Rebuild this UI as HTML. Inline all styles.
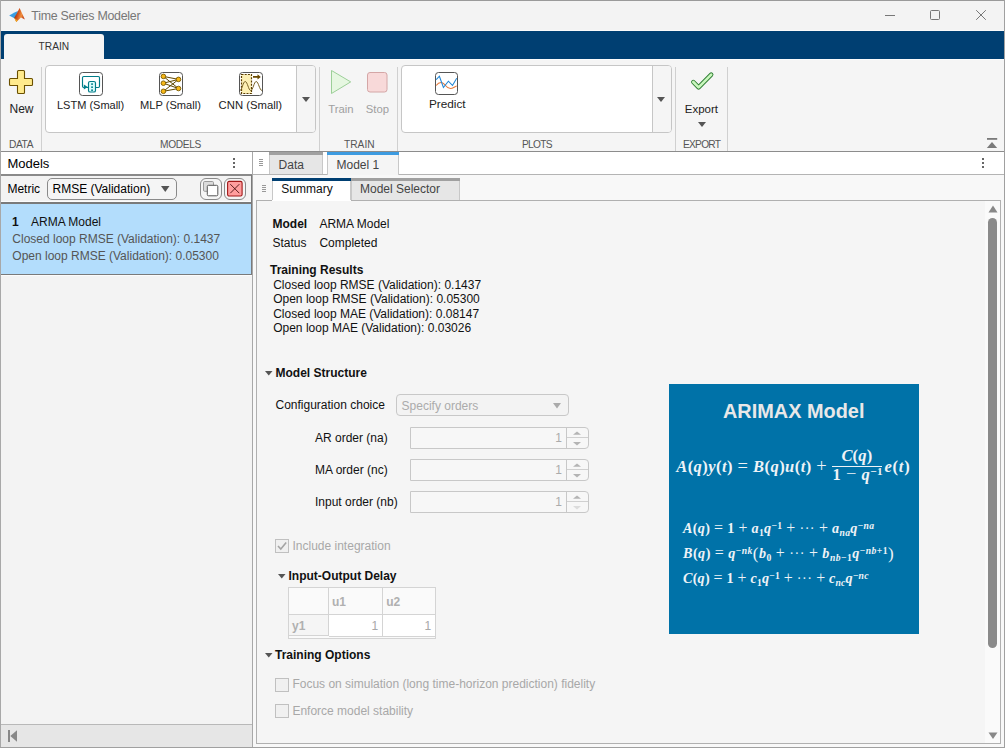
<!DOCTYPE html>
<html><head><meta charset="utf-8">
<style>
*{box-sizing:border-box;margin:0;padding:0}
html,body{width:1005px;height:748px;overflow:hidden;background:#f5f5f5;font-family:"Liberation Sans",sans-serif;font-size:12px;color:#000}
.a{position:absolute;overflow:visible}
.t{position:absolute;white-space:nowrap;line-height:1}
.eq{font-family:"Liberation Serif",serif;font-weight:700}
</style></head>
<body>
<div class="a" style="left:0px;top:0px;width:1005px;height:31px;background:#f3f3f3;"></div>
<div class="t" style="left:31.3px;top:9.50px;font-size:12.4px;color:#777;font-weight:400;letter-spacing:-0.25px">Time Series Modeler</div>
<svg class="a" style="left:8px;top:7px;" width="19" height="17" viewBox="0 0 19 17"><defs><linearGradient id="mg" x1="0" y1="0" x2="1" y2="0.4"><stop offset="0" stop-color="#6a1010"/><stop offset="0.45" stop-color="#d05018"/><stop offset="0.75" stop-color="#f09040"/><stop offset="1" stop-color="#c84818"/></linearGradient></defs><path d="M1.2 8.6 L6.5 5.6 L10 4 L8.5 9 L6.8 11.5 Z" fill="#3a9ee2"/><path d="M11.6 0.9 L16.9 12.4 L13 10.5 L8.3 15 L6.2 10.8 L8.5 7 Z" fill="url(#mg)"/><path d="M6.2 10.8 L8.3 15 L9.5 13.5 Z" fill="#f0b020"/></svg>
<div class="a" style="left:885px;top:15px;width:10px;height:1px;background:#777;"></div>
<div class="a" style="left:930px;top:10px;width:10px;height:10px;background:none;border:1px solid #777;border-radius:1.5px"></div>
<svg class="a" style="left:976px;top:10px;" width="10" height="10" viewBox="0 0 10 10"><path d="M0.2 0.2 L9.8 9.8 M9.8 0.2 L0.2 9.8" stroke="#777" stroke-width="1"/></svg>
<div class="a" style="left:0px;top:31px;width:1005px;height:28px;background:#003f72;"></div>
<div class="a" style="left:4px;top:34px;width:100px;height:25px;background:#f5f5f5;border-radius:3px 3px 0 0"></div>
<div class="a" style="left:104px;top:59px;width:900px;height:1px;background:#fcfcfc;"></div>
<div class="a" style="left:0px;top:30px;width:1005px;height:1px;background:#fafafa;"></div>
<div class="t" style="left:38.6px;top:41.97px;font-size:10.2px;color:#333;font-weight:400;">TRAIN</div>
<div class="a" style="left:0px;top:60px;width:1005px;height:91px;background:#f5f5f5;"></div>
<div class="a" style="left:0px;top:151px;width:1005px;height:1px;background:#8c8c8c;"></div>
<div class="a" style="left:41px;top:67px;width:1px;height:84px;background:#d0d0d0;"></div>
<div class="a" style="left:319px;top:67px;width:1px;height:84px;background:#d0d0d0;"></div>
<div class="a" style="left:397px;top:67px;width:1px;height:84px;background:#d0d0d0;"></div>
<div class="a" style="left:675px;top:67px;width:1px;height:84px;background:#d0d0d0;"></div>
<div class="a" style="left:727px;top:67px;width:1px;height:84px;background:#d0d0d0;"></div>
<div class="t" style="left:9px;top:139.97px;font-size:10.2px;color:#555;font-weight:400;letter-spacing:-0.4px">DATA</div>
<div class="t" style="left:160px;top:139.97px;font-size:10.2px;color:#555;font-weight:400;letter-spacing:-0.35px">MODELS</div>
<div class="t" style="left:344px;top:139.97px;font-size:10.2px;color:#555;font-weight:400;">TRAIN</div>
<div class="t" style="left:522px;top:139.97px;font-size:10.2px;color:#555;font-weight:400;letter-spacing:-0.7px">PLOTS</div>
<div class="t" style="left:683px;top:139.97px;font-size:10.2px;color:#555;font-weight:400;letter-spacing:-0.75px">EXPORT</div>
<svg class="a" style="left:9px;top:70px;" width="24" height="24" viewBox="0 0 24 24"><path d="M8.5 1.5 Q8.5 0.5 9.5 0.5 H14.5 Q15.5 0.5 15.5 1.5 V8.5 H22.5 Q23.5 8.5 23.5 9.5 V14.5 Q23.5 15.5 22.5 15.5 H15.5 V22.5 Q15.5 23.5 14.5 23.5 H9.5 Q8.5 23.5 8.5 22.5 V15.5 H1.5 Q0.5 15.5 0.5 14.5 V9.5 Q0.5 8.5 1.5 8.5 H8.5 Z" fill="#ffea8c" stroke="#6b5000" stroke-width="1.1"/></svg>
<div class="t" style="left:9.5px;top:103.04px;font-size:12px;color:#222;font-weight:400;">New</div>
<div class="a" style="left:45px;top:65px;width:271px;height:68px;background:#fff;border:1px solid #c6c6c6;border-radius:4px"></div>
<div class="a" style="left:296px;top:66px;width:19px;height:66px;background:#f5f5f5;border-left:1px solid #c6c6c6;border-radius:0 3px 3px 0"></div>
<svg class="a" style="left:302px;top:97px;" width="9" height="5" viewBox="0 0 9 5"><path d="M0 0 H8 L4 5 Z" fill="#555"/></svg>
<svg class="a" style="left:79px;top:72px;" width="24" height="24" viewBox="0 0 24 24"><rect x="0.5" y="0.5" width="23" height="23" rx="3" fill="#fff" stroke="#555" stroke-width="1"/><path d="M9 15.5 H4.7 Q3.5 15.5 3.5 14.3 V5.7 Q3.5 4.5 4.7 4.5 H19.3 Q20.5 4.5 20.5 5.7 V14.3 Q20.5 15.5 19.3 15.5 H17" fill="none" stroke="#007c88" stroke-width="1.15"/><rect x="9.5" y="9.5" width="7" height="10.5" rx="1.6" fill="#dafcfc" stroke="#007c88" stroke-width="1.15"/><rect x="12.2" y="11.3" width="1.7" height="1.6" fill="#00808c"/><rect x="12.2" y="14.4" width="1.7" height="1.6" fill="#00808c"/><rect x="12.2" y="17.4" width="1.7" height="1.6" fill="#00808c"/><path d="M4.8 12.5 L8.8 15 L4.8 17.5 Z" fill="#00808c"/></svg>
<div class="t" style="left:57px;top:99.89px;font-size:11px;color:#222;font-weight:400;">LSTM (Small)</div>
<svg class="a" style="left:159px;top:72px;" width="24" height="24" viewBox="0 0 24 24"><rect x="0.5" y="0.5" width="23" height="23" rx="3" fill="#fff" stroke="#555" stroke-width="1"/><line x1="4.4" y1="4.4" x2="19.5" y2="7.4" stroke="#5e4600" stroke-width="1"/><line x1="4.4" y1="4.4" x2="19.5" y2="16.5" stroke="#5e4600" stroke-width="1"/><line x1="4.4" y1="11.2" x2="19.5" y2="7.4" stroke="#5e4600" stroke-width="1"/><line x1="4.4" y1="11.2" x2="19.5" y2="16.5" stroke="#5e4600" stroke-width="1"/><line x1="4.4" y1="19.3" x2="19.5" y2="7.4" stroke="#5e4600" stroke-width="1"/><line x1="4.4" y1="19.3" x2="19.5" y2="16.5" stroke="#5e4600" stroke-width="1"/><circle cx="4.4" cy="4.4" r="2.3" fill="#f7b817" stroke="#7a5a00" stroke-width="0.9"/><circle cx="4.4" cy="11.2" r="2.3" fill="#f7b817" stroke="#7a5a00" stroke-width="0.9"/><circle cx="4.4" cy="19.3" r="2.3" fill="#f7b817" stroke="#7a5a00" stroke-width="0.9"/><circle cx="19.5" cy="7.4" r="2.3" fill="#f7b817" stroke="#7a5a00" stroke-width="0.9"/><circle cx="19.5" cy="16.5" r="2.3" fill="#f7b817" stroke="#7a5a00" stroke-width="0.9"/></svg>
<div class="t" style="left:140px;top:99.80px;font-size:11.1px;color:#222;font-weight:400;">MLP (Small)</div>
<svg class="a" style="left:239px;top:72px;" width="24" height="24" viewBox="0 0 24 24"><rect x="0.5" y="0.5" width="23" height="23" rx="3" fill="#fff" stroke="#555" stroke-width="1"/><rect x="2.5" y="2.5" width="10" height="19" fill="#fdf0b4" stroke="#5a3c00" stroke-width="1.2" stroke-dasharray="2 1.2"/><path d="M1 18.5 C3 18.5 4 9.5 6.2 9.5 C8.5 9.5 9.5 18.5 11.7 18.5 C14 18.5 15 9.5 17.2 9.5 C19.5 9.5 20.5 18.5 23 18.5" fill="none" stroke="#7a6428" stroke-width="1"/><path d="M14 4 H18.5 V2.3 L21.8 4.9 L18.5 7.5 V5.8 H14 Z" fill="#6b4a00"/></svg>
<div class="t" style="left:218.6px;top:99.63px;font-size:11.3px;color:#222;font-weight:400;">CNN (Small)</div>
<svg class="a" style="left:331px;top:70px;" width="21" height="25" viewBox="0 0 21 25"><path d="M0.5 0.5 L19.7 11.9 L0.5 23.5 Z" fill="#e6f7e1" stroke="#9ccf98" stroke-width="1"/></svg>
<svg class="a" style="left:367px;top:72px;" width="21" height="21" viewBox="0 0 21 21"><rect x="0.5" y="0.5" width="19.5" height="19.5" rx="2.5" fill="#f8d9d9" stroke="#d4a6a6" stroke-width="1"/></svg>
<div class="t" style="left:328.3px;top:103.83px;font-size:11.3px;color:#a0a0a0;font-weight:400;">Train</div>
<div class="t" style="left:365.8px;top:103.83px;font-size:11.3px;color:#a0a0a0;font-weight:400;">Stop</div>
<div class="a" style="left:401px;top:65px;width:271px;height:68px;background:#fff;border:1px solid #c6c6c6;border-radius:4px"></div>
<div class="a" style="left:652px;top:66px;width:19px;height:66px;background:#f5f5f5;border-left:1px solid #c6c6c6;border-radius:0 3px 3px 0"></div>
<svg class="a" style="left:657px;top:97px;" width="9" height="5" viewBox="0 0 9 5"><path d="M0 0 H8 L4 5 Z" fill="#555"/></svg>
<svg class="a" style="left:435px;top:72px;" width="23" height="23" viewBox="0 0 23 23"><rect x="0.5" y="0.5" width="22" height="22" rx="3" fill="#fff" stroke="#555" stroke-width="1"/><path d="M1.2 13.5 C3 11 4.5 10.5 6 10.5 C8 10.5 9 12 10.5 13.5 C12 15.5 13.5 16.5 15.5 16.5 C18 16.5 19.5 14.5 21.7 14" fill="none" stroke="#e87a3a" stroke-width="1.1"/><path d="M1.2 7.6 L4.4 4.2 L8.4 15.5 L13.4 9.2 L17.5 13.4 L21.7 6.2" fill="none" stroke="#1f86d6" stroke-width="1.05"/></svg>
<div class="t" style="left:428.9px;top:99.21px;font-size:11.8px;color:#222;font-weight:400;">Predict</div>
<svg class="a" style="left:688px;top:70px;" width="28" height="22" viewBox="0 0 28 22"><path d="M5.3 12 L10.6 17.4 L23.2 4.6" fill="none" stroke="#2e7d32" stroke-width="4.4" stroke-linecap="round" stroke-linejoin="round"/><path d="M5.3 12 L10.6 17.4 L23.2 4.6" fill="none" stroke="#c9f7bd" stroke-width="2.6" stroke-linecap="round" stroke-linejoin="round"/></svg>
<div class="t" style="left:684.8px;top:103.67px;font-size:11.5px;color:#222;font-weight:400;">Export</div>
<svg class="a" style="left:698px;top:122px;" width="9" height="5" viewBox="0 0 9 5"><path d="M0 0 H8 L4 5 Z" fill="#555"/></svg>
<svg class="a" style="left:986px;top:138px;" width="13" height="11" viewBox="0 0 13 11"><rect x="1" y="0" width="10.2" height="1.8" fill="#7a7a7a"/><path d="M0.8 10 H11.2 L6 4 Z" fill="#7a7a7a"/></svg>
<div class="a" style="left:0px;top:152px;width:252px;height:23px;background:#fff;"></div>
<div class="t" style="left:7.4px;top:157.00px;font-size:13px;color:#000;font-weight:400;">Models</div>
<div class="a" style="left:233px;top:158px;width:2px;height:2px;background:#666;"></div>
<div class="a" style="left:233px;top:162px;width:2px;height:2px;background:#666;"></div>
<div class="a" style="left:233px;top:166px;width:2px;height:2px;background:#666;"></div>
<div class="a" style="left:0px;top:174px;width:252px;height:2px;background:#8a8a8a;"></div>
<div class="a" style="left:0px;top:176px;width:252px;height:26px;background:#f3f3f3;"></div>
<div class="t" style="left:7.4px;top:182.84px;font-size:12px;color:#000;font-weight:400;">Metric</div>
<div class="a" style="left:47px;top:178px;width:130px;height:22px;background:#f5f5f5;border:1px solid #8a8a8a;border-radius:5px"></div>
<div class="t" style="left:52.5px;top:182.84px;font-size:12px;color:#000;font-weight:400;">RMSE (Validation)</div>
<svg class="a" style="left:161px;top:186px;" width="9" height="6" viewBox="0 0 9 6"><path d="M0 0 H8.5 L4.25 6 Z" fill="#555"/></svg>
<div class="a" style="left:200px;top:178px;width:22px;height:22px;background:#f5f5f5;border:1px solid #8a8a8a;border-radius:6px"></div>
<svg class="a" style="left:203px;top:181px;" width="16" height="16" viewBox="0 0 16 16"><rect x="0.5" y="0.5" width="10" height="9.8" rx="1.2" fill="#dcdcdc" stroke="#9a9a9a"/><rect x="4.3" y="4.3" width="10.5" height="10.5" rx="1.2" fill="#fff" stroke="#555"/></svg>
<div class="a" style="left:224px;top:178px;width:22px;height:22px;background:#f5f5f5;border:1px solid #8a8a8a;border-radius:6px"></div>
<svg class="a" style="left:227px;top:181px;" width="16" height="16" viewBox="0 0 16 16"><rect x="0.6" y="0.4" width="14.5" height="14.6" rx="1.5" fill="#ff9e9e" stroke="#a01818" stroke-width="1.1"/><path d="M3.3 3.2 L12.3 12.2 M12.3 3.2 L3.3 12.2" stroke="#4a1010" stroke-width="0.9"/></svg>
<div class="a" style="left:0px;top:202px;width:252px;height:2px;background:#7a7a7a;"></div>
<div class="a" style="left:0px;top:201px;width:252px;height:1px;background:#fcfcfc;"></div>
<div class="a" style="left:1px;top:204px;width:250px;height:70px;background:#b3ddfc;"></div>
<div class="a" style="left:1px;top:274px;width:251px;height:1px;background:#7a7a7a;"></div>
<div class="t" style="left:12px;top:216.04px;font-size:12px;color:#111;font-weight:700;">1</div>
<div class="t" style="left:31px;top:216.04px;font-size:12px;color:#111;font-weight:400;">ARMA Model</div>
<div class="t" style="left:12.3px;top:232.84px;font-size:12px;color:#555;font-weight:400;">Closed loop RMSE (Validation): 0.1437</div>
<div class="t" style="left:12.3px;top:249.84px;font-size:12px;color:#555;font-weight:400;">Open loop RMSE (Validation): 0.05300</div>
<div class="a" style="left:0px;top:275px;width:252px;height:449px;background:#f3f3f3;"></div>
<div class="a" style="left:0px;top:275px;width:252px;height:1px;background:#fcfcfc;"></div>
<div class="a" style="left:0px;top:724px;width:252px;height:1px;background:#b8b8b8;"></div>
<div class="a" style="left:0px;top:725px;width:252px;height:23px;background:#e6e6e6;"></div>
<svg class="a" style="left:8px;top:730px;" width="10" height="12" viewBox="0 0 10 12"><rect x="0" y="0" width="2" height="12" fill="#888"/><path d="M2.3 6 L9 0.2 V11.8 Z" fill="#888"/></svg>
<div class="a" style="left:252px;top:152px;width:1px;height:596px;background:#a8a8a8;"></div>
<div class="a" style="left:251px;top:175px;width:1px;height:100px;background:#7a7a7a;"></div>
<div class="a" style="left:253px;top:152px;width:752px;height:22px;background:#fff;"></div>
<div class="a" style="left:253px;top:174px;width:752px;height:1px;background:#b4b4b4;"></div>
<div class="a" style="left:253px;top:175px;width:752px;height:573px;background:#f8f8f8;"></div>
<div class="a" style="left:259px;top:159px;width:4px;height:1px;background:#999;"></div>
<div class="a" style="left:259px;top:161px;width:4px;height:1px;background:#999;"></div>
<div class="a" style="left:259px;top:163px;width:4px;height:1px;background:#999;"></div>
<div class="a" style="left:259px;top:165px;width:4px;height:1px;background:#999;"></div>
<div class="a" style="left:269px;top:152px;width:54px;height:22px;background:#e6e6e6;border-left:1px solid #c8c8c8;border-right:1px solid #c8c8c8"></div>
<div class="a" style="left:269px;top:152px;width:54px;height:3px;background:#a0a0a0;"></div>
<div class="t" style="left:278.6px;top:158.84px;font-size:12px;color:#444;font-weight:400;">Data</div>
<div class="a" style="left:327px;top:152px;width:72px;height:23px;background:#f5f5f5;border-left:1px solid #c8c8c8;border-right:1px solid #c8c8c8"></div>
<div class="a" style="left:327px;top:152px;width:72px;height:3px;background:#3d9be0;"></div>
<div class="t" style="left:336.5px;top:158.84px;font-size:12px;color:#444;font-weight:400;">Model 1</div>
<div class="a" style="left:982px;top:158px;width:2px;height:2px;background:#666;"></div>
<div class="a" style="left:982px;top:162px;width:2px;height:2px;background:#666;"></div>
<div class="a" style="left:982px;top:166px;width:2px;height:2px;background:#666;"></div>
<div class="a" style="left:262px;top:185px;width:4px;height:1px;background:#999;"></div>
<div class="a" style="left:262px;top:187px;width:4px;height:1px;background:#999;"></div>
<div class="a" style="left:262px;top:189px;width:4px;height:1px;background:#999;"></div>
<div class="a" style="left:262px;top:191px;width:4px;height:1px;background:#999;"></div>
<div class="a" style="left:272px;top:178px;width:79px;height:23px;background:#fff;border-left:1px solid #c8c8c8;border-right:1px solid #c8c8c8"></div>
<div class="a" style="left:272px;top:178px;width:79px;height:3px;background:#003f72;"></div>
<div class="t" style="left:281.3px;top:182.84px;font-size:12px;color:#111;font-weight:400;">Summary</div>
<div class="a" style="left:351px;top:178px;width:109px;height:22px;background:#e6e6e6;border-left:1px solid #c8c8c8;border-right:1px solid #c8c8c8"></div>
<div class="a" style="left:351px;top:178px;width:109px;height:3px;background:#a0a0a0;"></div>
<div class="t" style="left:360px;top:182.84px;font-size:12px;color:#444;font-weight:400;">Model Selector</div>
<div class="a" style="left:256px;top:200px;width:745px;height:544px;background:#f5f5f5;border:1px solid #b0b0b0"></div>
<div class="a" style="left:272px;top:200px;width:79px;height:1px;background:#fff;"></div>
<div class="a" style="left:985px;top:201px;width:15px;height:542px;background:#fafafa;"></div>
<svg class="a" style="left:988px;top:205px;" width="10" height="8" viewBox="0 0 10 8"><path d="M0.5 7.5 H9.5 L5 0.5 Z" fill="#888"/></svg>
<div class="a" style="left:988px;top:218px;width:9px;height:430px;background:#8a8a8a;border-radius:4.5px"></div>
<svg class="a" style="left:988px;top:732px;" width="10" height="7" viewBox="0 0 10 7"><path d="M0.5 0.5 H9.5 L5 7 Z" fill="#888"/></svg>
<div class="t" style="left:272.5px;top:217.84px;font-size:12px;color:#111;font-weight:700;">Model</div>
<div class="t" style="left:319.4px;top:217.84px;font-size:12px;color:#111;font-weight:400;">ARMA Model</div>
<div class="t" style="left:272.5px;top:236.84px;font-size:12px;color:#111;font-weight:400;">Status</div>
<div class="t" style="left:319.4px;top:236.84px;font-size:12px;color:#111;font-weight:400;">Completed</div>
<div class="t" style="left:270px;top:263.84px;font-size:12px;color:#111;font-weight:700;">Training Results</div>
<div class="t" style="left:273.2px;top:278.84px;font-size:12px;color:#111;font-weight:400;">Closed loop RMSE (Validation): 0.1437</div>
<div class="t" style="left:273.2px;top:293.14px;font-size:12px;color:#111;font-weight:400;">Open loop RMSE (Validation): 0.05300</div>
<div class="t" style="left:273.2px;top:307.84px;font-size:12px;color:#111;font-weight:400;">Closed loop MAE (Validation): 0.08147</div>
<div class="t" style="left:273.2px;top:322.34px;font-size:12px;color:#111;font-weight:400;">Open loop MAE (Validation): 0.03026</div>
<svg class="a" style="left:265px;top:370.5px;" width="8" height="5" viewBox="0 0 8 5"><path d="M0 0 H7.5 L3.75 4.5 Z" fill="#555"/></svg>
<div class="t" style="left:275.5px;top:366.84px;font-size:12px;color:#111;font-weight:700;">Model Structure</div>
<div class="t" style="left:275.5px;top:399.34px;font-size:12px;color:#111;font-weight:400;">Configuration choice</div>
<div class="a" style="left:396px;top:394px;width:173px;height:22px;background:#f3f3f3;border:1px solid #c8c8c8;border-radius:4px"></div>
<div class="t" style="left:401.6px;top:400.14px;font-size:12px;color:#ababab;font-weight:400;">Specify orders</div>
<svg class="a" style="left:553px;top:403px;" width="9" height="6" viewBox="0 0 9 6"><path d="M0 0 H8 L4 5.5 Z" fill="#aaa"/></svg>
<div class="t" style="left:315px;top:431.84px;font-size:12px;color:#111;font-weight:400;">AR order (na)</div>
<div class="a" style="left:410px;top:427px;width:179px;height:22px;background:#f7f7f7;border:1px solid #c8c8c8;border-radius:0 4px 4px 0"></div>
<div class="a" style="left:566px;top:427px;width:1px;height:22px;background:#c8c8c8;"></div>
<div class="t" style="left:555.3px;top:431.84px;font-size:12px;color:#ababab;font-weight:400;">1</div>
<div class="a" style="left:567px;top:437px;width:21px;height:1px;background:#d0d0d0;"></div>
<svg class="a" style="left:571px;top:431px;" width="12" height="16" viewBox="0 0 12 16"><path d="M2 3.8 H10 L6 0.6 Z" fill="#b4b4b4"/><path d="M2 11 H10 L6 14.6 Z" fill="#b4b4b4"/></svg>
<div class="t" style="left:315px;top:463.84px;font-size:12px;color:#111;font-weight:400;">MA order (nc)</div>
<div class="a" style="left:410px;top:459px;width:179px;height:22px;background:#f7f7f7;border:1px solid #c8c8c8;border-radius:0 4px 4px 0"></div>
<div class="a" style="left:566px;top:459px;width:1px;height:22px;background:#c8c8c8;"></div>
<div class="t" style="left:555.3px;top:463.84px;font-size:12px;color:#ababab;font-weight:400;">1</div>
<div class="a" style="left:567px;top:469px;width:21px;height:1px;background:#d0d0d0;"></div>
<svg class="a" style="left:571px;top:463px;" width="12" height="16" viewBox="0 0 12 16"><path d="M2 3.8 H10 L6 0.6 Z" fill="#b4b4b4"/><path d="M2 11 H10 L6 14.6 Z" fill="#b4b4b4"/></svg>
<div class="t" style="left:315px;top:495.84px;font-size:12px;color:#111;font-weight:400;">Input order (nb)</div>
<div class="a" style="left:410px;top:491px;width:179px;height:22px;background:#f7f7f7;border:1px solid #c8c8c8;border-radius:0 4px 4px 0"></div>
<div class="a" style="left:566px;top:491px;width:1px;height:22px;background:#c8c8c8;"></div>
<div class="t" style="left:555.3px;top:495.84px;font-size:12px;color:#ababab;font-weight:400;">1</div>
<div class="a" style="left:567px;top:501px;width:21px;height:1px;background:#d0d0d0;"></div>
<svg class="a" style="left:571px;top:495px;" width="12" height="16" viewBox="0 0 12 16"><path d="M2 3.8 H10 L6 0.6 Z" fill="#b4b4b4"/><path d="M2 11 H10 L6 14.6 Z" fill="#dcdcdc"/></svg>
<div class="a" style="left:275px;top:539px;width:14px;height:14px;background:#f0f0f0;border:1px solid #c0c0c0"></div>
<svg class="a" style="left:276px;top:540px;" width="12" height="12" viewBox="0 0 12 12"><path d="M2 6 L4.8 9 L10.2 2.6" fill="none" stroke="#a4a4a4" stroke-width="1.6"/></svg>
<div class="t" style="left:292.5px;top:540.34px;font-size:12px;color:#a8a8a8;font-weight:400;">Include integration</div>
<svg class="a" style="left:278px;top:574px;" width="8" height="5" viewBox="0 0 8 5"><path d="M0 0 H7.5 L3.75 4.5 Z" fill="#555"/></svg>
<div class="t" style="left:288.5px;top:569.84px;font-size:12px;color:#111;font-weight:700;">Input-Output Delay</div>
<div class="a" style="left:288px;top:587px;width:148px;height:52px;background:#fafafa;border:1px solid #d4d4d4"></div>
<div class="a" style="left:289px;top:615px;width:39px;height:20px;background:#f5f5f5;"></div>
<div class="a" style="left:329px;top:615px;width:106px;height:21px;background:#fff;"></div>
<div class="a" style="left:328px;top:588px;width:1px;height:48px;background:#d4d4d4;"></div>
<div class="a" style="left:382px;top:588px;width:1px;height:48px;background:#d4d4d4;"></div>
<div class="a" style="left:289px;top:614px;width:146px;height:1px;background:#d4d4d4;"></div>
<div class="a" style="left:289px;top:635px;width:39px;height:1px;background:#d4d4d4;"></div>
<div class="a" style="left:329px;top:636px;width:106px;height:1px;background:#d4d4d4;"></div>
<div class="t" style="left:332px;top:596.34px;font-size:12px;color:#b0b0b0;font-weight:700;">u1</div>
<div class="t" style="left:386.2px;top:596.34px;font-size:12px;color:#b0b0b0;font-weight:700;">u2</div>
<div class="t" style="left:292px;top:620.14px;font-size:12px;color:#b0b0b0;font-weight:700;">y1</div>
<div class="t" style="left:371.5px;top:620.14px;font-size:12px;color:#a8a8a8;font-weight:400;">1</div>
<div class="t" style="left:424.5px;top:620.14px;font-size:12px;color:#a8a8a8;font-weight:400;">1</div>
<svg class="a" style="left:265px;top:652.5px;" width="8" height="5" viewBox="0 0 8 5"><path d="M0 0 H7.5 L3.75 4.5 Z" fill="#555"/></svg>
<div class="t" style="left:275px;top:648.84px;font-size:12px;color:#111;font-weight:700;">Training Options</div>
<div class="a" style="left:275px;top:678px;width:14px;height:14px;background:#f0f0f0;border:1px solid #c0c0c0"></div>
<div class="t" style="left:292.4px;top:678.34px;font-size:12px;color:#a8a8a8;font-weight:400;">Focus on simulation (long time-horizon prediction) fidelity</div>
<div class="a" style="left:275px;top:704px;width:14px;height:14px;background:#f0f0f0;border:1px solid #c0c0c0"></div>
<div class="t" style="left:292.4px;top:704.84px;font-size:12px;color:#a8a8a8;font-weight:400;">Enforce model stability</div>
<div class="a" style="left:669px;top:384px;width:250px;height:250px;background:#0072a8;"></div>
<div class="t" style="left:723px;top:402.15px;font-size:19.9px;color:#e8e8e8;font-weight:700;">ARIMAX Model</div>
<div class="t eq" style="left:676.2px;top:458.50px;font-size:16.5px;color:#eef3f7;letter-spacing:0.45px"><i>A</i>(<i>q</i>)<i>y</i>(<i>t</i>) <span style="font-weight:400;font-size:1.12em;line-height:0">=</span> <i>B</i>(<i>q</i>)<i>u</i>(<i>t</i>) <span style="font-weight:400;font-size:1.12em;line-height:0">+</span></div>
<div class="t eq" style="left:841.4px;top:448.30px;font-size:16.5px;color:#eef3f7;letter-spacing:0.2px"><i>C</i>(<i>q</i>)</div>
<div class="a" style="left:831.7px;top:465.5px;width:50.5px;height:1.3px;background:#eef3f7;"></div>
<div class="t eq" style="left:832.5px;top:466.80px;font-size:16.5px;color:#eef3f7;letter-spacing:0.5px">1 <span style="font-weight:400;font-size:1.12em;line-height:0">&minus;</span> <i>q</i><span style="font-size:0.68em;position:relative;top:-0.42em">&minus;1</span></div>
<div class="t eq" style="left:884.4px;top:458.50px;font-size:16.5px;color:#eef3f7;letter-spacing:0.8px"><i>e</i>(<i>t</i>)</div>
<div class="t eq" style="left:683px;top:521.35px;font-size:14.2px;color:#eef3f7;letter-spacing:0.3px"><i>A</i>(<i>q</i>) <span style="font-weight:400;font-size:1.12em;line-height:0">=</span> 1 <span style="font-weight:400;font-size:1.12em;line-height:0">+</span> <i>a</i><span style="font-size:0.68em;position:relative;top:0.25em">1</span><i>q</i><span style="font-size:0.68em;position:relative;top:-0.42em">&minus;1</span> <span style="font-weight:400;font-size:1.12em;line-height:0">+</span> <span style="font-weight:400;letter-spacing:0.5px">&middot;&middot;&middot;</span> <span style="font-weight:400;font-size:1.12em;line-height:0">+</span> <i>a</i><span style="font-size:0.68em;position:relative;top:0.25em"><i>na</i></span><i>q</i><span style="font-size:0.68em;position:relative;top:-0.42em">&minus;<i>na</i></span></div>
<div class="t eq" style="left:683px;top:546.35px;font-size:14.2px;color:#eef3f7;letter-spacing:0.45px"><i>B</i>(<i>q</i>) <span style="font-weight:400;font-size:1.12em;line-height:0">=</span> <i>q</i><span style="font-size:0.68em;position:relative;top:-0.42em">&minus;<i>nk</i></span><span style='font-size:1.2em;font-weight:400;position:relative;top:0.04em;line-height:0'>(</span><i>b</i><span style="font-size:0.68em;position:relative;top:0.25em">0</span> <span style="font-weight:400;font-size:1.12em;line-height:0">+</span> <span style="font-weight:400;letter-spacing:0.5px">&middot;&middot;&middot;</span> <span style="font-weight:400;font-size:1.12em;line-height:0">+</span> <i>b</i><span style="font-size:0.68em;position:relative;top:0.25em"><i>nb</i>&minus;1</span><i>q</i><span style="font-size:0.68em;position:relative;top:-0.42em">&minus;<i>nb</i>+1</span><span style='font-size:1.2em;font-weight:400;position:relative;top:0.04em;line-height:0'>)</span></div>
<div class="t eq" style="left:683px;top:571.35px;font-size:14.2px;color:#eef3f7;letter-spacing:0.2px"><i>C</i>(<i>q</i>) <span style="font-weight:400;font-size:1.12em;line-height:0">=</span> 1 <span style="font-weight:400;font-size:1.12em;line-height:0">+</span> <i>c</i><span style="font-size:0.68em;position:relative;top:0.25em">1</span><i>q</i><span style="font-size:0.68em;position:relative;top:-0.42em">&minus;1</span> <span style="font-weight:400;font-size:1.12em;line-height:0">+</span> <span style="font-weight:400;letter-spacing:0.5px">&middot;&middot;&middot;</span> <span style="font-weight:400;font-size:1.12em;line-height:0">+</span> <i>c</i><span style="font-size:0.68em;position:relative;top:0.25em"><i>nc</i></span><i>q</i><span style="font-size:0.68em;position:relative;top:-0.42em">&minus;<i>nc</i></span></div>
<div class="a" style="left:0px;top:0px;width:1005px;height:1px;background:#9a9a9a;"></div>
<div class="a" style="left:0px;top:0px;width:1px;height:748px;background:#a8a8a8;"></div>
<div class="a" style="left:1004px;top:0px;width:1px;height:748px;background:#a0a0a0;"></div>
<div class="a" style="left:0px;top:747px;width:1005px;height:1px;background:#a0a0a0;"></div>
</body></html>
